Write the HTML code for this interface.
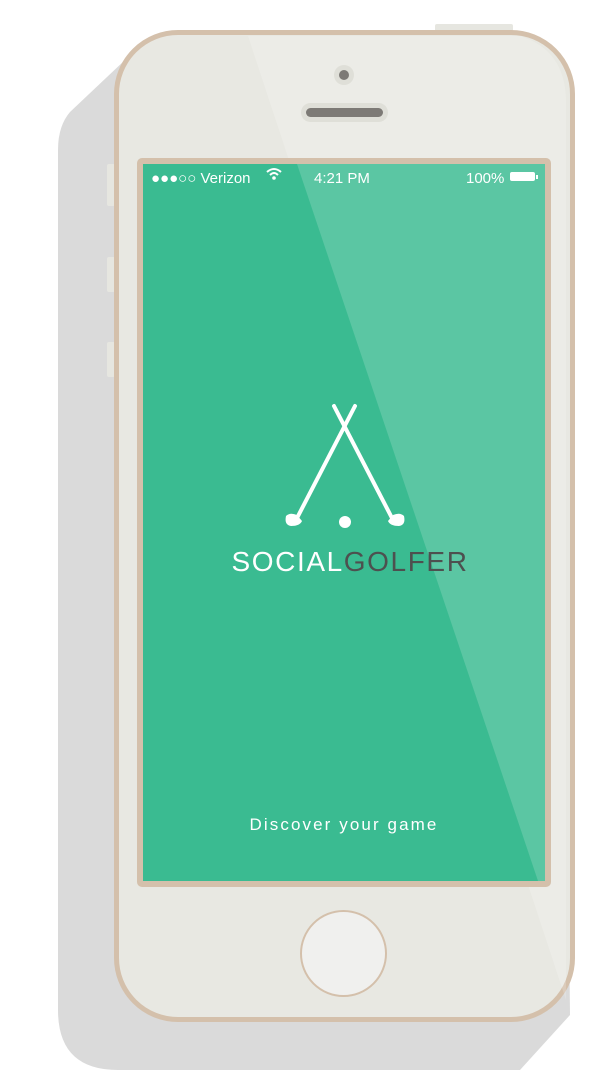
<!DOCTYPE html>
<html><head><meta charset="utf-8"><style>
html,body{margin:0;padding:0;background:#fff;width:595px;height:1080px;overflow:hidden;position:relative;font-family:"Liberation Sans",sans-serif}
.abs{position:absolute}
.phone{left:114px;top:30px;width:451px;height:982px;border:5px solid #d4c0ab;border-radius:64px;background:#e8e8e2;overflow:hidden}
.screenf{left:137px;top:158px;width:414px;height:729px;background:#d4c0ab;border-radius:5px}
.screen{left:143px;top:164px;width:402px;height:717px;background:#3abb91;overflow:hidden}
.btn{background:#e6e6e0;border-radius:2px}
</style></head><body>
<svg class="abs" style="left:0;top:0" width="595" height="1080">
<path d="M125 60 L70 112 Q58 126 58 150 L58 1010 Q58 1070 118 1070 L520 1070 L570 1015 L560 90 Z" fill="#dadada"/>
</svg>
<div class="abs btn" style="left:435px;top:24px;width:78px;height:8px"></div>
<div class="abs btn" style="left:107px;top:164px;width:8px;height:42px"></div>
<div class="abs btn" style="left:107px;top:257px;width:8px;height:35px"></div>
<div class="abs btn" style="left:107px;top:342px;width:8px;height:35px"></div>
<div class="abs phone"></div>
<svg class="abs" style="left:0;top:0" width="595" height="1080">
<path d="M248 36 L520 36 Q565 50 566 100 L566 1000 Z" fill="#fff" opacity="0.18"/>
</svg>
<div class="abs" style="left:334px;top:65px;width:20px;height:20px;border-radius:50%;background:#dfdfd8"></div>
<div class="abs" style="left:339px;top:70px;width:10px;height:10px;border-radius:50%;background:#7d7a76"></div>
<div class="abs" style="left:301px;top:103px;width:87px;height:19px;border-radius:10px;background:#dfdfd8"></div>
<div class="abs" style="left:306px;top:108px;width:77px;height:9px;border-radius:5px;background:#7d7a76"></div>
<div class="abs screenf"></div>
<div class="abs screen"></div>
<svg class="abs" style="left:0;top:0" width="595" height="1080">
<path d="M297 164 L545 164 L545 881 L538 881 Z" fill="#fff" opacity="0.17"/>
<g stroke="#fff" stroke-width="4" stroke-linecap="round" fill="none">
<line x1="355" y1="406" x2="296" y2="520"/>
<line x1="334" y1="406" x2="393" y2="520"/>
</g>
<g fill="#fff">
<path d="M286 516 Q290 512 297 515 L302 521 Q300 526 291 526 Q284 525 286 516Z"/>
<path d="M404 516 Q400 512 393 515 L388 521 Q390 526 399 526 Q406 525 404 516Z"/>
<circle cx="345" cy="522" r="6"/>
</g>
</svg>
<div class="abs" style="left:151px;top:170px;color:#fff;font-size:15px">●●●○○ Verizon</div>
<div class="abs" style="left:266px;top:167px;color:#fff;font-size:15px">
<svg width="16" height="14"><path d="M1 5 Q8 -1 15 5 M4 8 Q8 4 12 8" stroke="#fff" stroke-width="2" fill="none"/><circle cx="8" cy="11" r="1.8" fill="#fff"/></svg></div>
<div class="abs" style="left:314px;top:170px;color:#fff;font-size:15px">4:21 PM</div>
<div class="abs" style="left:466px;top:170px;color:#fff;font-size:15px">100%</div>
<div class="abs" style="left:510px;top:172px;width:25px;height:9px;background:#fff;border-radius:2px"></div>
<div class="abs" style="left:536px;top:175px;width:2px;height:4px;background:#fff"></div>
<div class="abs" style="left:220px;top:546px;width:260px;text-align:center;font-size:28px;letter-spacing:1.6px;color:#fff;font-weight:300">SOCIAL<span style="color:#4d504f">GOLFER</span></div>
<div class="abs" style="left:143px;top:815px;width:402px;text-align:center;font-size:17px;letter-spacing:2.1px;color:#fff">Discover your game</div>
<div class="abs" style="left:300px;top:910px;width:87px;height:87px;border-radius:50%;background:#f0f0ee;border:2px solid #d4c0ab;box-sizing:border-box"></div>
</body></html>
